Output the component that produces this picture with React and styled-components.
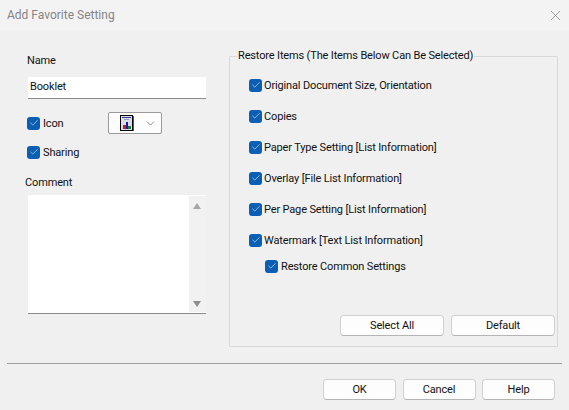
import React from "react";
import styled, { createGlobalStyle } from "styled-components";
import { X, ChevronDown, Check } from "lucide-react";

const GlobalStyle = createGlobalStyle`
  html, body {
    margin: 0;
    padding: 0;
    background: #f0f0f0;
  }
  * { box-sizing: border-box; }
`;

const Dialog = styled.div`
  width: 569px;
  height: 410px;
  overflow: hidden;
  display: flex;
  flex-direction: column;
  background: #f0f0f0;
  color: #111;
  font-family: Roboto, "Open Sans", sans-serif;
  font-size: 11px;
  letter-spacing: -0.15px;
`;

const TitleBar = styled.div`
  height: 30px;
  flex: none;
  display: flex;
  align-items: center;
  justify-content: space-between;
  padding: 0 5px 0 7px;
  background: #f3f3f3;
`;

const Title = styled.span`
  font-size: 12px;
  letter-spacing: 0;
  color: #858585;
`;

const Body = styled.div`
  height: 317px;
  flex: none;
  display: flex;
  padding: 0 11px 0 27px;
`;

const LeftColumn = styled.div`
  width: 202px;
  flex: none;
  display: flex;
  flex-direction: column;
`;

const Label = styled.label`
  display: block;
  height: 16px;
  line-height: 16px;
`;

const NameLabel = styled(Label)`
  margin-top: 23px;
`;

const CommentLabel = styled(Label)`
  margin-top: 13px;
  margin-left: -2px;
`;

const TextField = styled.div`
  width: 178px;
  height: 22px;
  margin: 8px 0 0 1px;
  padding-left: 2px;
  line-height: 19px;
  background: #fff;
  border-bottom: 1px solid #8a8a8a;
`;

const IconRow = styled.div`
  display: grid;
  grid-template-columns: 81px 54px;
  align-items: center;
  margin-top: 13px;
  height: 22px;
`;

const SharingRow = styled.div`
  margin-top: 8px;
`;

const CheckRow = styled.div`
  display: flex;
  align-items: center;
  gap: ${(p) => p.$gap || 2}px;
  height: 20px;
  margin-left: ${(p) => p.$indent || 0}px;
`;

const CheckBox = styled.span`
  width: 13px;
  height: 13px;
  flex: none;
  display: flex;
  align-items: center;
  justify-content: center;
  background: #0a5fb4;
  border-radius: 3px;
  color: #dcebf8;
`;

const Combo = styled.div`
  height: 22px;
  display: flex;
  align-items: center;
  justify-content: space-between;
  padding: 0 4px 0 11px;
  background: #fdfdfd;
  border: 1px solid #9a9a9a;
  border-radius: 2px;
  color: #555;
`;

const CommentBox = styled.div`
  width: 178px;
  height: 119px;
  margin: 4px 0 0 1px;
  display: flex;
  justify-content: flex-end;
  background: #fff;
  border-bottom: 1px solid #8a8a8a;
`;

const ScrollTrack = styled.div`
  width: 17px;
  margin: 1px 0 1px;
  display: flex;
  flex-direction: column;
  align-items: center;
  justify-content: space-between;
  padding: 7px 1px 5px 0;
  background: #f1f1f1;
`;

const Arrow = styled.span`
  width: 0;
  height: 0;
  border-left: 4.5px solid transparent;
  border-right: 4.5px solid transparent;
  border-${(p) => (p.$up ? "bottom" : "top")}: 6px solid ${(p) => (p.$up ? "#a6a6a6" : "#8c8c8c")};
`;

const Group = styled.fieldset`
  width: 330px;
  height: 299px;
  margin: 18px 0 0 0;
  padding: 0 2px 10px 19px;
  display: flex;
  flex-direction: column;
  border: 1px solid #d9d9d9;
  border-radius: 1px;
`;

const Legend = styled.legend`
  margin-left: -12px;
  padding: 0 1px;
  line-height: 16px;
`;

const Items = styled.div`
  display: flex;
  flex-direction: column;
  gap: 11px;
  margin-top: 11px;
`;

const SubItem = styled.div`
  margin-top: -5px;
`;

const GroupButtons = styled.div`
  margin-top: auto;
  display: flex;
  justify-content: flex-end;
  gap: 7px;
`;

const Button = styled.button`
  width: ${(p) => p.$width}px;
  height: 21px;
  padding: 0;
  background: #fdfdfd;
  border: 1px solid #d0d0d0;
  border-bottom-color: #b5b5b5;
  border-radius: 4px;
  font: inherit;
  letter-spacing: inherit;
  color: #111;
`;

const Separator = styled.div`
  height: 1px;
  flex: none;
  margin: 16px 7px 0;
  background: #a0a0a0;
`;

const Footer = styled.div`
  display: flex;
  justify-content: flex-end;
  gap: 6.5px;
  padding: 15px 14px 0 0;
`;

const restoreItems = [
  "Original Document Size, Orientation",
  "Copies",
  "Paper Type Setting [List Information]",
  "Overlay [File List Information]",
  "Per Page Setting [List Information]",
  "Watermark [Text List Information]",
];

function Checked({ children, indent, gap }) {
  return (
    <CheckRow $indent={indent} $gap={gap}>
      <CheckBox>
        <Check size={10} strokeWidth={1.5} />
      </CheckBox>
      {children}
    </CheckRow>
  );
}

function FavoriteIcon() {
  return (
    <svg width="14" height="16" viewBox="0 0 14 16">
      <rect x="0.5" y="0.5" width="12" height="15" fill="#dcdce4" stroke="#000" />
      <rect x="13" y="1" width="1" height="15" fill="#555" />
      <rect x="2" y="2" width="9" height="1" fill="#3a3a9a" />
      <rect x="4" y="4" width="5" height="1" fill="#9a9ac0" />
      <rect x="3" y="10" width="3" height="4" fill="#c02020" />
      <rect x="6" y="7" width="2" height="7" fill="#1a1ab0" />
      <rect x="8" y="11" width="3" height="3" fill="#108040" />
    </svg>
  );
}

export default function App() {
  return (
    <>
      <GlobalStyle />
      <Dialog>
        <TitleBar>
          <Title>Add Favorite Setting</Title>
          <X size={17} strokeWidth={1} color="#777" />
        </TitleBar>
        <Body>
          <LeftColumn>
            <NameLabel>Name</NameLabel>
            <TextField>Booklet</TextField>
            <IconRow>
              <Checked gap={3}>Icon</Checked>
              <Combo>
                <FavoriteIcon />
                <ChevronDown size={13} strokeWidth={1.2} />
              </Combo>
            </IconRow>
            <SharingRow>
              <Checked gap={3}>Sharing</Checked>
            </SharingRow>
            <CommentLabel>Comment</CommentLabel>
            <CommentBox>
              <ScrollTrack>
                <Arrow $up />
                <Arrow />
              </ScrollTrack>
            </CommentBox>
          </LeftColumn>
          <Group>
            <Legend>Restore Items (The Items Below Can Be Selected)</Legend>
            <Items>
              {restoreItems.map((item) => (
                <Checked key={item}>{item}</Checked>
              ))}
              <SubItem>
                <Checked indent={16} gap={3}>Restore Common Settings</Checked>
              </SubItem>
            </Items>
            <GroupButtons>
              <Button $width={104}>Select All</Button>
              <Button $width={104}>Default</Button>
            </GroupButtons>
          </Group>
        </Body>
        <Separator />
        <Footer>
          <Button $width={73}>OK</Button>
          <Button $width={73}>Cancel</Button>
          <Button $width={73}>Help</Button>
        </Footer>
      </Dialog>
    </>
  );
}
